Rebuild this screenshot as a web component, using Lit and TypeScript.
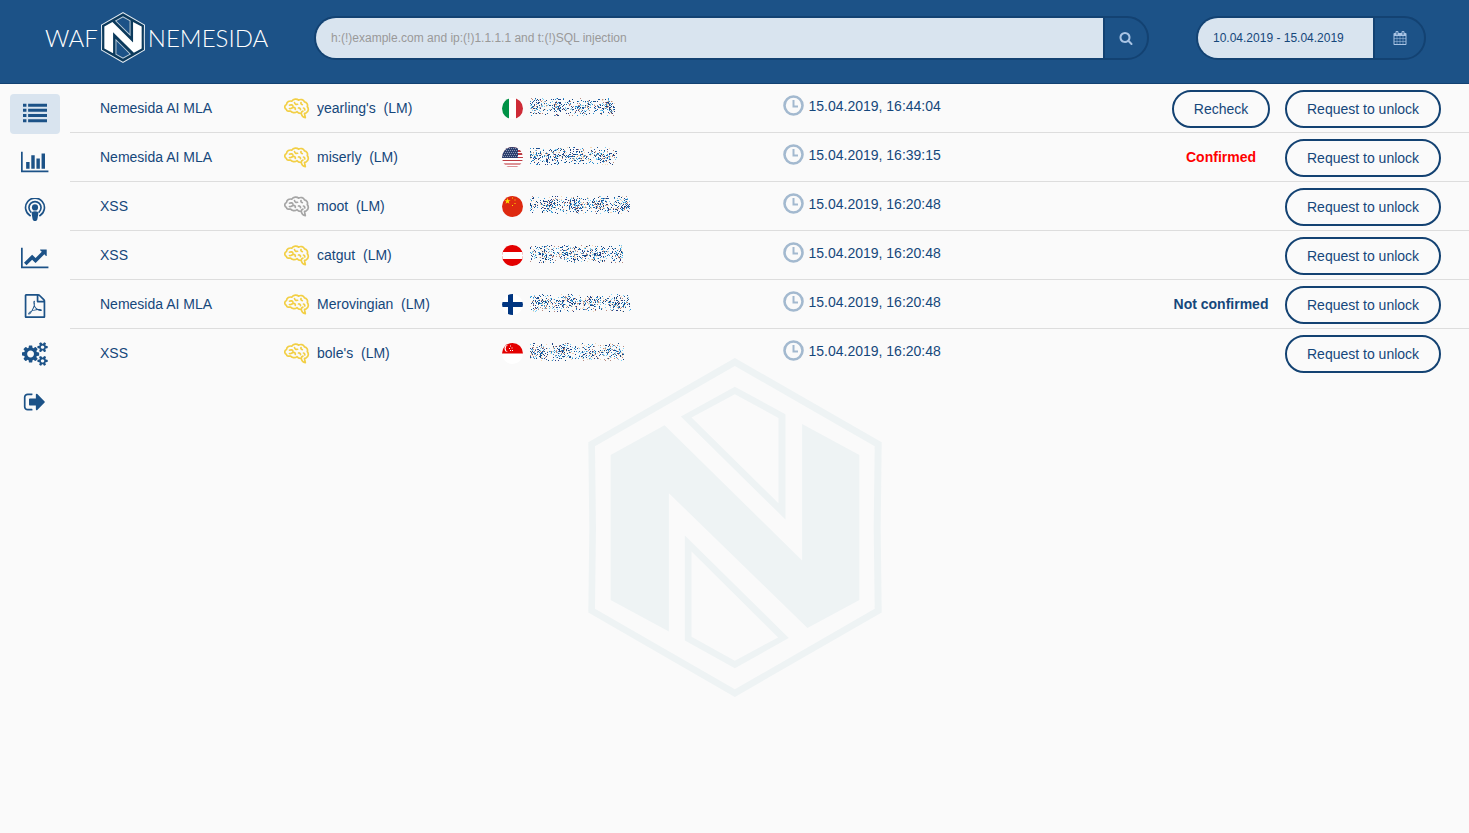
import { LitElement, html, css, svg, nothing } from "lit";
import { customElement, state } from "lit/decorators.js";

type Row = {
  attack: string;
  host: string;
  trained: boolean;
  flag: string;
  maskWidth: number;
  time: string;
  status?: "recheck" | "confirmed" | "rejected";
};

const ROWS: Row[] = [
  { attack: "Nemesida AI MLA", host: "yearling's", trained: true, flag: "it", maskWidth: 85, time: "15.04.2019, 16:44:04", status: "recheck" },
  { attack: "Nemesida AI MLA", host: "miserly", trained: true, flag: "us", maskWidth: 87, time: "15.04.2019, 16:39:15", status: "confirmed" },
  { attack: "XSS", host: "moot", trained: false, flag: "cn", maskWidth: 100, time: "15.04.2019, 16:20:48" },
  { attack: "XSS", host: "catgut", trained: true, flag: "at", maskWidth: 93, time: "15.04.2019, 16:20:48" },
  { attack: "Nemesida AI MLA", host: "Merovingian", trained: true, flag: "fi", maskWidth: 101, time: "15.04.2019, 16:20:48", status: "rejected" },
  { attack: "XSS", host: "bole's", trained: true, flag: "sg", maskWidth: 94, time: "15.04.2019, 16:20:48" },
];

const SEARCH = svg`<path d="M1216 832q0-185-131.5-316.5t-316.5-131.5-316.5 131.5-131.5 316.5 131.5 316.5 316.5 131.5 316.5-131.5 131.5-316.5zm512 832q0 52-38 90t-90 38q-54 0-90-38l-343-342q-179 124-399 124-143 0-273.5-55.5t-225-150-150-225-55.5-273.5 55.5-273.5 150-225 225-150 273.5-55.5 273.5 55.5 225 150 150 225 55.5 273.5q0 220-124 399l343 343q37 37 37 90z"/>`;

const CALENDAR = svg`<path d="M192 1664h288v-288h-288v288zm352 0h320v-288h-320v288zm-352-352h288v-320h-288v320zm352 0h320v-320h-320v320zm-352-384h288v-288h-288v288zm736 736h320v-288h-320v288zm-384-736h320v-288h-320v288zm768 736h288v-288h-288v288zm-384-352h320v-320h-320v320zm-352-864v-288q0-13-9.5-22.5t-22.5-9.5h-64q-13 0-22.5 9.5t-9.5 22.5v288q0 13 9.5 22.5t22.5 9.5h64q13 0 22.5-9.5t9.5-22.5zm736 864h288v-320h-288v320zm-384-384h320v-288h-320v288zm384 0h288v-288h-288v288zm32-480v-288q0-13-9.5-22.5t-22.5-9.5h-64q-13 0-22.5 9.5t-9.5 22.5v288q0 13 9.5 22.5t22.5 9.5h64q13 0 22.5-9.5t9.5-22.5zm384-64v1280q0 52-38 90t-90 38h-1408q-52 0-90-38t-38-90v-1280q0-52 38-90t90-38h128v-96q0-66 47-113t113-47h64q66 0 113 47t47 113v96h384v-96q0-66 47-113t113-47h64q66 0 113 47t47 113v96h128q52 0 90 38t38 90z"/>`;

const NAV = [
  { label: "Attacks", width: 1792, shape: svg`<path d="M0 128h256v224H0zM384 128h1408v224H384zM0 512h256v224H0zM384 512h1408v224H384zM0 896h256v224H0zM384 896h1408v224H384zM0 1280h256v224H0zM384 1280h1408v224H384z"/>` },
  { label: "Statistics", width: 2048, shape: svg`<path d="M640 896v512h-256v-512h256zm384-512v1024h-256v-1024h256zm1024 1152v128h-2048v-1536h128v1408h1920zm-640-896v768h-256v-768h256zm384-384v1152h-256v-1152h256z"/>` },
  { label: "Scanner", width: 1792, shape: svg`<circle cx="896" cy="700" r="230"/><path d="M896 980c-190 0-240 60-240 160 0 130 40 340 64 450 22 100 70 130 176 130s154-30 176-130c24-110 64-320 64-450 0-100-50-160-240-160z"/><path fill="none" stroke="currentColor" stroke-width="125" stroke-linecap="round" d="M590 1050a450 450 0 1 1 612 0M540 1320a705 705 0 1 1 712 0"/>` },
  { label: "Trends", width: 2048, shape: svg`<path d="M2048 1536v128h-2048v-1536h128v1408h1920zm-128-1248v435q0 21-19.5 29.5t-35.5-7.5l-121-121-633 633q-10 10-23 10t-23-10l-233-233-416 416-192-192 585-585q10-10 23-10t23 10l233 233 464-464-121-121q-16-16-7.5-35.5t29.5-19.5h435q14 0 23 9t9 23z"/>` },
  { label: "Reports", width: 1792, shape: svg`<path d="M1596 380q28 28 48 76t20 88v1152q0 40-28 68t-68 28h-1344q-40 0-68-28t-28-68v-1600q0-40 28-68t68-28h896q40 0 88 20t76 48zm-444-244v376h376q-10-29-22-41l-313-313q-12-12-41-22zm384 1528v-1024h-416q-40 0-68-28t-28-68v-416h-768v1536h1280zm-514-593q33 26 84 56 59-7 117-7 147 0 177 49 16 22 2 52 0 1-1 2l-2 2v1q-6 38-71 38-48 0-115-20t-130-53q-221 24-392 83-153 262-242 262-15 0-28-7l-24-12q-1-1-6-5-10-10-6-36 9-40 56-91.5t132-96.5q14-9 23 6 2 2 2 4 52-85 107-197 68-136 104-262-24-82-30.5-159.5t6.5-127.5q11-40 42-40h22q23 0 35 15 18 21 9 68-2 6-4 8 1 3 1 8v30q-2 123-14 192 55 164 146 238zm-576 411q52-24 137-158-51 40-87.5 84t-49.5 74zm398-920q-15 42-2 132 1-7 7-44 0-3 7-43 1-4 4-8-1-1-1-2t-1-2-1-3q-1-22-13-36 0 1-1 2v4zm-124 661q135-54 284-81-2-1-13-9.5t-16-13.5q-76-67-127-176-27 86-83 197-30 56-45 83zm646-16q-24-24-140-24 76 28 124 28 14 0 18-1 0-1-2-3z"/>` },
  { label: "Settings", width: 1920, shape: svg`<path d="M896 896q0-106-75-181t-181-75-181 75-75 181 75 181 181 75 181-75 75-181zm768 512q0-52-38-90t-90-38-90 38-38 90q0 53 37.5 90.5t90.5 37.5 90.5-37.5 37.5-90.5zm0-1024q0-52-38-90t-90-38-90 38-38 90q0 53 37.5 90.5t90.5 37.5 90.5-37.5 37.5-90.5zm-384 421v185q0 10-7 19.5t-16 10.5l-155 24q-11 35-32 76 34 48 90 115 7 11 7 20 0 12-7 19-23 30-82.5 89.5t-78.5 59.5q-11 0-21-7l-115-90q-37 19-77 31-11 108-23 155-7 24-30 24h-186q-11 0-20-7.5t-10-17.5l-23-153q-34-10-75-31l-118 89q-7 7-20 7-11 0-21-8-144-133-144-160 0-9 7-19 10-14 41-53t47-61q-23-44-35-82l-152-24q-10-1-17-9.5t-7-19.5v-185q0-10 7-19.5t16-10.5l155-24q11-35 32-76-34-48-90-115-7-11-7-20 0-12 7-20 22-30 82-89t79-59q11 0 21 7l115 90q34-18 77-32 11-108 23-154 7-24 30-24h186q11 0 20 7.5t10 17.5l23 153q34 10 75 31l118-89q8-7 20-7 11 0 21 8 144 133 144 160 0 8-7 19-12 16-42 54t-45 60q23 48 34 82l152 23q10 2 17 10.5t7 19.5zm640 533v140q0 16-149 31-12 27-30 52 51 113 51 138 0 4-4 7-122 71-124 71-8 0-46-47t-52-68q-20 2-30 2t-30-2q-14 21-52 68t-46 47q-2 0-124-71-4-3-4-7 0-25 51-138-18-25-30-52-149-15-149-31v-140q0-16 149-31 13-29 30-52-51-113-51-138 0-4 4-7 4-2 35-20t59-34 30-16q8 0 46 46.5t52 67.5q20-2 30-2t30 2q51-71 92-112l6-2q4 0 124 70 4 3 4 7 0 25-51 138 17 23 30 52 149 15 149 31zm0-1024v140q0 16-149 31-12 27-30 52 51 113 51 138 0 4-4 7-122 71-124 71-8 0-46-47t-52-68q-20 2-30 2t-30-2q-14 21-52 68t-46 47q-2 0-124-71-4-3-4-7 0-25 51-138-18-25-30-52-149-15-149-31v-140q0-16 149-31 13-29 30-52-51-113-51-138 0-4 4-7 4-2 35-20t59-34 30-16q8 0 46 46.5t52 67.5q20-2 30-2t30 2q51-71 92-112l6-2q4 0 124 70 4 3 4 7 0 25-51 138 17 23 30 52 149 15 149 31z"/>` },
  { label: "Sign out", width: 1792, shape: svg`<path d="M704 1440q0 4 1 20t.5 26.5-3 23.5-10 19.5-20.5 6.5h-320q-119 0-203.5-84.5t-84.5-203.5v-704q0-119 84.5-203.5t203.5-84.5h320q13 0 22.5 9.5t9.5 22.5q0 4 1 20t.5 26.5-3 23.5-10 19.5-20.5 6.5h-320q-66 0-113 47t-47 113v704q0 66 47 113t113 47h312l11.5 1 11.5 3 8 5.5 7 9 2 13.5zm928-544q0 26-19 45l-544 544q-19 19-45 19t-45-19-19-45v-288h-448q-26 0-45-19t-19-45v-384q0-26 19-45t45-19h448v-288q0-26 19-45t45-19 45 19l544 544q19 19 19 45z"/>` },
];

const FLAGS: Record<string, unknown> = {
  it: svg`<path fill="#009246" d="M0 0h7v21H0z"/><path fill="#fff" d="M7 0h7v21H7z"/><path fill="#ce2b37" d="M14 0h7v21h-7z"/>`,
  us: svg`<path fill="#fff" d="M0 0h21v21H0z"/><path fill="#bd3d44" d="M0 0h21v2H0zM0 3h21v2H0zM0 6h21v2H0zM0 10h21v1H0zM0 13h21v1H0z"/><path fill="#dc9296" d="M0 16h21v2H0zM0 19h21v1H0z"/><path fill="#2c3f6e" d="M0 0h16v11H0z"/><path stroke="#8d99b5" stroke-dasharray="1 1" d="M1 1.500h15M2 3.500h14M1 5.500h15M2 7.500h14M1 9.500h15"/>`,
  cn: svg`<path fill="#de2910" d="M0 0h21v21H0z"/><path fill="#ffde00" d="M5.500 2l.8 2.200h2.300l-1.900 1.400.7 2.200-1.900-1.300-1.900 1.300.7-2.200-1.900-1.400h2.300zM10 1.500h1v1h-1zM12.500 3.500h1v1h-1zM12.500 7h1v1h-1zM10 9h1v1h-1z"/>`,
  at: svg`<path fill="#e30000" d="M0 0h21v21H0z"/><path fill="#fff" d="M0 7h21v7H0z"/>`,
  fi: svg`<path fill="#fff" d="M0 0h21v21H0z"/><path fill="#003580" d="M6 0h5v21H6zM0 8h21v5H0z"/>`,
  sg: svg`<path fill="#fff" d="M0 0h21v21H0z"/><path fill="#e30000" d="M0 0h21v10.500H0z"/><path fill="#fff" d="M6 2a3.500 3.500 0 0 0 0 7 3.800 3.800 0 0 1 0-7zM8 2.500h1v1H8zM7 5h1v1H7zM9.500 4.500h1v1h-1zM8 7h1v1H8zM10 7h1v1h-1z"/>`,
};

const BRAIN = svg`<path d="M3 11.500C.8 10.500.5 7.500 3 6.500 3.200 3.800 6 2.500 8.200 3.200 10 .8 13.500.6 15 2.200c2.200-1.400 5-.6 6 1.600 2.400.4 3.500 2.800 2.800 4.800 1.600 2 1.200 5-.8 6-.6.6-1.400.8-2 .8l.8 4.200c-2-.2-3.600-1.800-4-4.200-1.800.2-3.400-.4-4.200-1.800-2.200 1.600-5.400 1.200-6.600-.6C4.600 13.400 3 13 3 11.500zM6 7.200c1.400-.8 3-.4 3.400.8M6 10.500c2 .4 2.600-1.300 4.200-1.200 1.200 0 1.800 1 1.600 2M11 4.500c.2 1.600 1.600 2.200 3 1.800M17.500 4.500c-.3 1 .2 2 1.300 2.200M15 10c1.200-.2 2 .6 2 1.600M20 10c.8.2 1.400 1 1.200 2M17.800 15.200c0-1 .6-1.800 1.600-2"/>`;

const EMBLEM_FRAME = "M495 40L936 293 933 550 936 804 495 1058 55 804 58 550 55 293ZM495 64L75 305 78 550 75 793 495 1035 915 793 912 550 915 305Z";
const EMBLEM_SLOTS = "M495 126L647 209V525L333 216ZM495 149L365 219 626 476V220ZM345 573L657 881 495 972 345 888ZM365 621V877L495 949 625 879Z";
const EMBLEM_LETTER = "M284 242L697 648V238L869 331V767L713 851 297 446V861L122 767V331Z";

const MASK_COLOURS = ["#15467d", "#1c5a9c", "#2b8fd0", "#7fd0f4", "#b98a80", "#f3d9b8", "#2c3f86"];

/** Pixel dust that hides a client address. */
function addressMask(width: number, seed: number) {
  let s = seed * 7919 + 17;
  const next = () => {
    s = (s * 1664525 + 1013904223) % 4294967296;
    return s / 4294967296;
  };
  const paths = MASK_COLOURS.map(() => "");
  for (let y = 0; y < 18; y++) {
    for (let x = 0; x < width; x++) {
      const band = 1 - Math.abs(y - 8.5) / 11;
      const cluster = 0.85 + 0.25 * Math.sin(x / 4 + seed);
      if (next() < 0.52 * band * cluster) {
        paths[Math.floor(next() * MASK_COLOURS.length)] += `M${x} ${y}h1v1h-1z`;
      }
    }
  }
  return html`<svg class="mask" width=${width} height="18" viewBox="0 0 ${width} 18" shape-rendering="crispEdges" role="img" aria-label="Hidden address">
    ${paths.map((d, i) => svg`<path fill=${MASK_COLOURS[i]} d=${d} />`)}
  </svg>`;
}

@customElement("app-root")
export class AppRoot extends LitElement {
  @state() private active = 0;

  static styles = css`
    :host {
      display: block;
      min-height: 100vh;
      background: #fafafa;
      color: #15477b;
      font: 14px/20px "Liberation Sans", Arial, sans-serif;
    }
    * { box-sizing: border-box; }
    svg { display: block; flex: none; }
    .header {
      display: flex;
      align-items: flex-start;
      height: 84px;
      padding: 12px 43px 0 45px;
      background: #1c5287;
      border-bottom: 1px solid #134272;
    }
    .logo {
      display: flex;
      align-items: center;
      gap: 3px;
      width: 225px;
      height: 51px;
      margin-right: 44px;
      color: #fff;
      font: 300 24px/32px Lato, sans-serif;
      text-decoration: none;
    }
    .group {
      display: flex;
      height: 44px;
      margin-top: 4px;
      border: 2px solid #134272;
      border-radius: 22px;
      overflow: hidden;
    }
    .search { flex: 1; margin-right: 47px; }
    .dates { width: 230px; }
    .field {
      flex: 1;
      min-width: 0;
      padding: 0 15px;
      border: 0;
      background: #d9e4ef;
      color: #15477b;
      font: 12px/16px "Liberation Sans", Arial, sans-serif;
      outline: 0;
    }
    .field::placeholder { color: #999; opacity: 1; }
    .addon {
      display: grid;
      place-items: center;
      width: 44px;
      padding: 0;
      border: 0;
      border-left: 2px solid #134272;
      background: none;
      color: #a9c4e4;
    }
    .dates .addon { width: 51px; }
    .body { display: grid; grid-template-columns: 70px 1fr; }
    .nav {
      grid-area: 1 / 1;
      display: flex;
      flex-direction: column;
      align-items: center;
      align-self: start;
      gap: 8px;
      padding-top: 10px;
    }
    .nav-link {
      display: grid;
      place-items: center;
      width: 50px;
      height: 40px;
      border-radius: 4px;
      color: #1c5287;
    }
    .nav-link.active { background: #d9e4ef; }
    .watermark { grid-area: 1 / 1 / 2 / 3; justify-self: center; margin-top: 274px; }
    .table {
      grid-area: 1 / 2;
      align-self: start;
      width: 100%;
      border-collapse: separate;
      border-spacing: 0;
      table-layout: fixed;
    }
    .col-attack { width: 15.3%; }
    .col-host { width: 15.6%; }
    .col-address { width: 20.1%; }
    .col-status { width: 114px; }
    .col-action { width: 191px; }
    td { height: 49px; padding: 14px 0 0; border-bottom: 1px solid #ddd; vertical-align: top; }
    tr:last-child td { border-bottom-color: transparent; }
    td.attack { padding-left: 30px; }
    td.host-cell { padding-top: 13px; }
    td.status { text-align: center; }
    td.time { padding-top: 11px; }
    td.button-cell { padding-top: 6px; }
    .line { display: flex; align-items: center; }
    .host { gap: 7px; white-space: pre; }
    .address { gap: 7px; align-items: flex-start; }
    .time-line { gap: 4px; }
    .flag { border-radius: 50%; }
    .brain { color: #f2cf45; }
    .brain.off { color: #a5a5a5; }
    .confirmed { color: #f00; }
    .pill {
      height: 38px;
      padding: 0 20px;
      border: 2px solid #134272;
      border-radius: 19px;
      background: #fafafa;
      color: #15477b;
      font: inherit;
      white-space: nowrap;
    }
    .action .pill { margin-left: 7px; }
  `;

  private status(row: Row) {
    if (row.status === "recheck") return html`<button class="pill" type="button">Recheck</button>`;
    if (row.status === "confirmed") return html`<b class="confirmed">Confirmed</b>`;
    if (row.status === "rejected") return html`<b>Not confirmed</b>`;
    return nothing;
  }

  render() {
    return html`
      <header class="header">
        <a class="logo" href="#">
          <span>WAF</span>
          <svg width="44" height="51" viewBox="55 40 881 1018" preserveAspectRatio="none" aria-hidden="true">
            <path fill="#0c3a5c" d="M495 50L925 298V798L495 1048 65 798V298Z" />
            <path fill="#1c5287" d="M495 149L626 220V476L365 219ZM365 621L625 879 495 949 365 877Z" />
            <path fill="#e3ebf2" fill-rule="evenodd" d=${EMBLEM_FRAME} />
            <path fill="#b9cbdc" fill-rule="evenodd" d=${EMBLEM_SLOTS} />
            <path fill="#fff" d=${EMBLEM_LETTER} />
          </svg>
          <span>NEMESIDA</span>
        </a>
        <form class="group search" @submit=${(e: Event) => e.preventDefault()}>
          <input class="field" type="text" aria-label="Search" placeholder="h:(!)example.com and ip:(!)1.1.1.1 and t:(!)SQL injection" />
          <button class="addon" aria-label="Search">
            <svg width="14" height="14" viewBox="0 0 1792 1792" fill="currentColor">${SEARCH}</svg>
          </button>
        </form>
        <div class="group dates">
          <input class="field" type="text" aria-label="Date range" value="10.04.2019 - 15.04.2019" />
          <button class="addon" type="button" aria-label="Open calendar">
            <svg width="14" height="14" viewBox="0 0 1792 1792" fill="currentColor">${CALENDAR}</svg>
          </button>
        </div>
      </header>
      <div class="body">
        <svg class="watermark" width="294" height="339" viewBox="55 40 881 1018" fill="#eef3f4" aria-hidden="true">
          <path fill-rule="evenodd" d="${EMBLEM_FRAME}${EMBLEM_SLOTS}" />
          <path d=${EMBLEM_LETTER} />
        </svg>
        <nav class="nav">
          ${NAV.map(
            (item, i) => html`<a
              class="nav-link ${i === this.active ? "active" : ""}"
              href="#"
              aria-label=${item.label}
              @click=${() => (this.active = i)}
              ><svg height="24" viewBox="0 0 ${item.width} 1792" fill="currentColor">${item.shape}</svg></a
            >`
          )}
        </nav>
        <table class="table">
          <colgroup>
            <col class="col-attack" /><col class="col-host" /><col class="col-address" />
            <col /><col class="col-status" /><col class="col-action" />
          </colgroup>
          <tbody>
            ${ROWS.map(
              (row, i) => html`<tr>
                <td class="attack">${row.attack}</td>
                <td class="host-cell">
                  <div class="line host"><svg class="brain ${row.trained ? "" : "off"}" width="26" height="22" viewBox="0.5 -1 26 22" fill="none" stroke="currentColor" stroke-width="1.700" stroke-linecap="round" stroke-linejoin="round">${BRAIN}</svg><span>${row.host}  (LM)</span></div>
                </td>
                <td>
                  <div class="line address">
                    <svg class="flag" width="21" height="21" viewBox="0 0 21 21">${FLAGS[row.flag]}</svg>
                    ${addressMask(row.maskWidth, i + 1)}
                  </div>
                </td>
                <td class="time">
                  <div class="line time-line">
                    <svg width="21" height="21" viewBox="0 0 21 21" fill="none" stroke="#a3b9cf"><circle cx="10.500" cy="10.500" r="9" stroke-width="2.600" /><path stroke-width="2" d="M10.500 5v6.500H15" /></svg>
                    <span>${row.time}</span>
                  </div>
                </td>
                <td class="status ${row.status === "recheck" ? "button-cell" : ""}">${this.status(row)}</td>
                <td class="action button-cell"><button class="pill" type="button">Request to unlock</button></td>
              </tr>`
            )}
          </tbody>
        </table>
      </div>
    `;
  }
}
